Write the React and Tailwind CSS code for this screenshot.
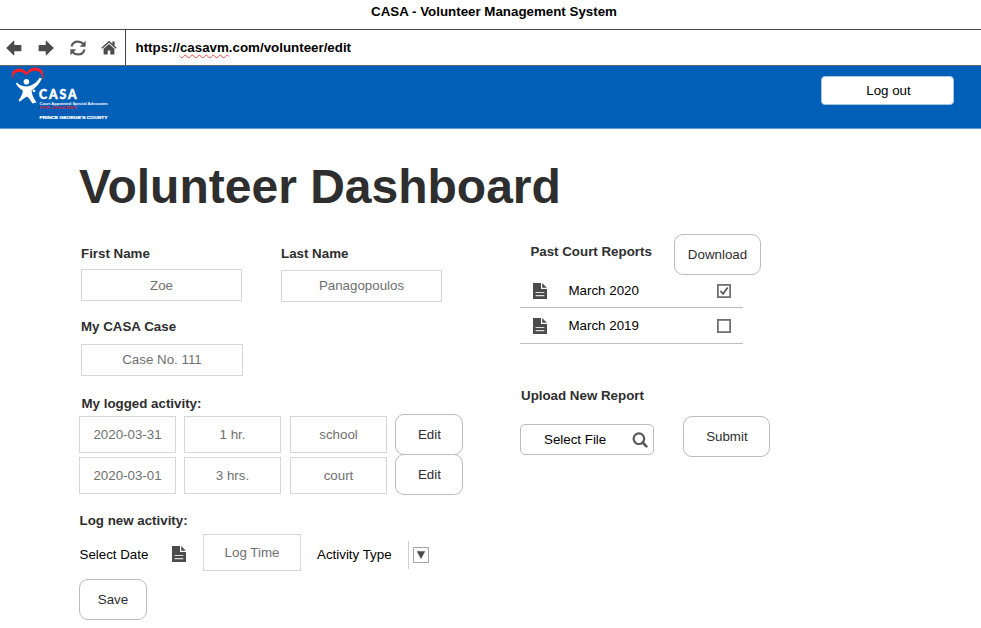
import React from "react";

const ink = "#4b4b4b";

function ArrowIcon({ flip }) {
  return (
    <svg width="16" height="16" viewBox="0 0 16 16" className={flip ? "-scale-x-100" : ""}>
      <path d="M0.2 8 L7.6 0.8 Q8.3 0.4 8.3 1.2 V5 H14.6 Q15.4 5 15.4 5.8 V10.4 Q15.4 11.2 14.6 11.2 H8.3 V14.8 Q8.3 15.6 7.6 15.2 Z" fill={ink} />
    </svg>
  );
}

function RefreshIcon() {
  return (
    <svg width="16" height="16" viewBox="0 0 16 16">
      <path d="M1.5 6.6 C2.3 3.4 5 1.6 8 1.6 C10 1.6 11.8 2.3 13.2 3.8" fill="none" stroke="#5a5a5a" strokeWidth="2.2" />
      <path d="M15.6 0.8 V6.7 H9.7 Z" fill="#555" />
      <path d="M14.5 9.4 C13.7 12.6 11 14.4 8 14.4 C6 14.4 4.2 13.7 2.8 12.2" fill="none" stroke="#5a5a5a" strokeWidth="2.2" />
      <path d="M0.4 15.2 V9.3 H6.3 Z" fill="#555" />
    </svg>
  );
}

function HomeIcon() {
  return (
    <svg width="16" height="15" viewBox="0 0 16 15" className="-ml-[0.5px]">
      <path d="M0.8 8.2 L8 1.8 L15.2 8.2" fill="none" stroke={ink} strokeWidth="1.5" />
      <path d="M11.3 1.6 H13.6 V6 L11.3 4 Z" fill={ink} />
      <path d="M8 4 L13.4 8.8 V14.4 H9.3 V10.6 H6.7 V14.4 H2.6 V8.8 Z" fill={ink} />
    </svg>
  );
}

function FileIcon({ className = "" }) {
  return (
    <svg width="14" height="16" viewBox="0 0 14 16" className={`block ${className}`}>
      <path d="M0 0 H8 V6 H14 V16 H0 Z" fill={ink} />
      <path d="M9.2 0 L13.8 4.8 H9.2 Z" fill={ink} />
      <path d="M2.6 9.5 H11.3 M2.6 12.6 H11.3" stroke="#dcdcdc" strokeWidth="1.2" />
    </svg>
  );
}

function SearchIcon() {
  return (
    <svg width="16" height="16" viewBox="0 0 16 16">
      <circle cx="6.9" cy="6.7" r="5.3" fill="none" stroke="#5a5a5a" strokeWidth="2.2" />
      <path d="M10.7 10.5 L14.4 14.4" stroke="#5a5a5a" strokeWidth="2.6" strokeLinecap="round" />
    </svg>
  );
}

function Logo() {
  return (
    <svg width="112" height="60" viewBox="0 0 112 60" className="block" fontFamily="Liberation Sans, Arial, sans-serif" fontWeight="bold">
      <path
        d="M13.4 13.6 C10.6 9 11.5 3.7 17.5 2.7 C21.5 2 25 3.9 26.6 6.2 C29 3 33 1 37 1.7 C42.8 2.8 45 8 42 14.4 C42.6 9 41 5.4 36.5 4.9 C32.5 4.6 29 6.6 26.6 9.6 C24.5 7 21.5 5.4 18 6.1 C14 6.9 12.6 9.5 13.4 13.6 Z"
        fill="#f5222d"
      />
      <circle cx="26.4" cy="15.8" r="2.8" fill="#fff" />
      <path
        d="M16.8 16.6 C19.5 19.4 22.5 20.4 26.2 20.4 C31.5 20.4 36 17.3 39.6 11.8 L41.8 12.6 C39.4 18.3 35.4 22 31.6 24.5 C31.8 28 33.4 32.2 36.6 36.6 L32.4 37.4 C30.6 34.4 28.8 32 27 30.6 C25 31.8 22.4 33.8 19.4 35.8 L18.6 34 C21.2 31 22.6 28 22.8 24.6 C20 23 17.8 20.6 15.8 17.4 Z"
        fill="#fff"
      />
      <circle cx="34" cy="24.8" r="1.4" fill="#fff" />
      <text x="39" y="32.8" fontSize="12.2" fontFamily="Lato, Liberation Sans, sans-serif" fontWeight="900" stroke="#fff" strokeWidth="0.5" textLength="37.5" lengthAdjust="spacing" fill="#fff">CASA</text>
      <text x="39.5" y="38.5" fontSize="3.8" textLength="68.5" lengthAdjust="spacingAndGlyphs" fill="#fff">Court Appointed Special Advocates</text>
      <text x="39.5" y="43.3" fontSize="3.8" textLength="37" lengthAdjust="spacingAndGlyphs" fill="#d01f45">FOR CHILDREN</text>
      <path d="M39.5 46.6 H108" stroke="#2b4fa8" strokeWidth="0.8" />
      <text x="39.5" y="53" fontSize="4.3" textLength="68" lengthAdjust="spacingAndGlyphs" fill="#fff" stroke="#fff" strokeWidth="0.2">PRINCE GEORGE'S COUNTY</text>
    </svg>
  );
}

function Label({ className, children }) {
  return <div className={`h-4 whitespace-nowrap font-bold leading-4 text-[#2e2e2e] ${className}`}>{children}</div>;
}

function Field({ className, children }) {
  return (
    <div className={`flex items-center justify-center border border-[#d6d6d6] bg-white text-[#707070] ${className}`}>
      {children}
    </div>
  );
}

function Button({ className, children }) {
  return (
    <button className={`flex shrink-0 items-center justify-center border border-[#bcbcbc] bg-white text-[#2e2e2e] ${className}`}>
      {children}
    </button>
  );
}

function ActivityRow({ cells, className, buttonClass = "" }) {
  const [date, time, kind] = cells;
  return (
    <div className={`flex h-[41px] items-center ${className}`}>
      <Field className="h-[37px] w-[97px]">{date}</Field>
      <Field className="ml-2 h-[37px] w-[97px]">{time}</Field>
      <Field className="ml-[9px] h-[37px] w-[97px]">{kind}</Field>
      <Button className={`ml-[8.4px] h-[41px] w-[68px] rounded-[9px] ${buttonClass}`}>Edit</Button>
    </div>
  );
}

function ReportRow({ name, checked, className }) {
  return (
    <div className={`flex w-[223px] items-center border-b border-[#bdbdbd] pl-[13px] pr-3 ${className}`}>
      <FileIcon />
      <span className="ml-[21.5px] flex-1 text-black">{name}</span>
      <svg width="14" height="14" viewBox="0 0 14 14">
        <rect x="0.9" y="0.9" width="12.2" height="12.2" fill="#fff" stroke="#6a6a6a" strokeWidth="1.7" />
        {checked && <path d="M3.5 7 L6 9.8 L10.8 3.6" fill="none" stroke="#555" strokeWidth="1.7" />}
      </svg>
    </div>
  );
}

export default function App() {
  return (
    <div className="h-[628px] w-[981px] overflow-hidden bg-white font-['Liberation_Sans',Arial,sans-serif] text-[13.33px] leading-4">
      <div className="flex h-[29px] justify-center pl-[7px] pt-1 font-bold text-black">CASA - Volunteer Management System</div>
      <div className="flex h-[37px] border-t border-b border-t-[#444] border-b-[#666] bg-white">
        <div className="flex w-[125px] items-center gap-4 pl-[5.5px]">
          <ArrowIcon />
          <ArrowIcon flip />
          <RefreshIcon />
          <HomeIcon />
        </div>
        <div className="flex items-center border-l border-[#444] pl-[9.5px] font-bold text-black">
          https://
          <span className="underline decoration-[#f04848] decoration-wavy decoration-[0.8px] underline-offset-2">casavm</span>
          .com/volunteer/edit
        </div>
      </div>
      <header className="flex h-[63px] items-start justify-between border-b border-[#5b9bd8] bg-[#0060b8] pr-[27px]">
        <Logo />
        <button className="mt-[10px] h-[29px] w-[133px] rounded-[4px] border border-[#a9c4dd] bg-white pl-[2px] text-black">Log out</button>
      </header>

      <main className="flex pl-[79px]">
        <section className="w-[441px]">
          <h1 className="mt-[30px] h-14 whitespace-nowrap text-[48px] font-bold leading-[56px] text-[#2e2e2e]">Volunteer Dashboard</h1>
          <div className="mt-[31px] flex pl-[2px]">
            <div className="w-[200px]">
              <Label>First Name</Label>
              <Field className="mt-[7px] h-8 w-[161px] pt-px">Zoe</Field>
            </div>
            <div>
              <Label>Last Name</Label>
              <Field className="mt-2 h-8 w-[161px]">Panagopoulos</Field>
            </div>
          </div>
          <Label className="mt-[17px] pl-[2px]">My CASA Case</Label>
          <Field className="ml-[2px] mt-[9px] h-8 w-[162px]">Case No. 111</Field>
          <Label className="mt-5 pl-[2.5px]">My logged activity:</Label>
          <ActivityRow className="mt-[2px]" cells={["2020-03-31", "1 hr.", "school"]} />
          <ActivityRow buttonClass="-mt-[2px]" cells={["2020-03-01", "3 hrs.", "court"]} />
          <Label className="mt-[17px] pl-[0.5px]">Log new activity:</Label>
          <div className="mt-[5px] flex h-[37px] items-center">
            <span className="w-[93px] pl-[0.5px] pt-1 text-black">Select Date</span>
            <FileIcon className="mt-[3px]" />
            <Field className="ml-[17px] h-[37px] w-[98px]">Log Time</Field>
            <span className="ml-4 pt-1 text-black">Activity Type</span>
            <div className="ml-4 mt-[5px] flex h-7 items-center border-l border-[#d0d0d0] pl-1">
              <svg width="16" height="16" viewBox="0 0 16 16">
                <rect x="0.5" y="0.5" width="15" height="15" fill="#fff" stroke="#a5a5a5" />
                <path d="M3.8 4.2 H12.2 L8 12 Z" fill={ink} />
              </svg>
            </div>
          </div>
          <Button className="mt-2 h-[41px] w-[68px] rounded-[9px]">Save</Button>
        </section>

        <section className="pt-[105px]">
          <div className="flex h-[41px] items-center">
            <Label className="-mt-[6px] w-[154px] pl-[10.4px]">Past Court Reports</Label>
            <Button className="h-[41px] w-[87px] rounded-[9px]">Download</Button>
          </div>
          <ReportRow className="h-[33px]" name="March 2020" checked />
          <ReportRow className="h-9" name="March 2019" />
          <Label className="mt-[44px] pl-px">Upload New Report</Label>
          <div className="mt-3 flex items-start">
            <div className="mt-2 flex h-[31px] w-[134px] items-center justify-between rounded-[5px] border border-[#bcbcbc] pl-[23px] pr-[5.5px] text-black">
              Select File
              <SearchIcon />
            </div>
            <Button className="ml-[29.4px] h-[41px] w-[87px] rounded-[9px]">Submit</Button>
          </div>
        </section>
      </main>
    </div>
  );
}
